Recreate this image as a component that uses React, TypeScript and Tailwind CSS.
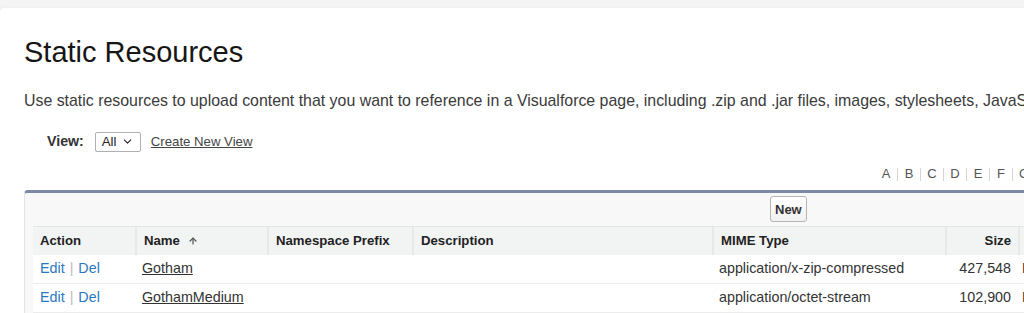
import { ChevronDown, ArrowUp } from "lucide-react";

const cols = [
  { label: "Action", w: "w-[102px]" },
  { label: "Name", w: "w-[132px]", sort: true },
  { label: "Namespace Prefix", w: "w-[145px]" },
  { label: "Description", w: "w-[300px]" },
  { label: "MIME Type", w: "w-[233px]" },
  { label: "Size", w: "w-[73px]", right: true },
  { label: "Cache Control", w: "w-[140px]" },
];

const rows = [
  { name: "Gotham", mime: "application/x-zip-compressed", size: "427,548" },
  { name: "GothamMedium", mime: "application/octet-stream", size: "102,900" },
];

const letters = ["A", "B", "C", "D", "E", "F", "G", "H"];

const App = () => {
  return (
    <div className="h-[313px] w-[1024px] overflow-hidden bg-[#f4f4f4] pt-2 font-['Liberation_Sans',Arial,sans-serif]">
      <div className="h-full rounded-tl-[4px] bg-white pl-6 shadow-[0_0_1px_rgba(0,0,0,0.15)]">
        {/* Title */}
        <h1 className="pt-[26px] text-[29px] leading-[36px] text-[#161616]">Static Resources</h1>
        <p className="mt-[21px] whitespace-nowrap text-[15.9px] leading-5 text-[#3a3a3a]">
          Use static resources to upload content that you want to reference in a Visualforce page, including .zip and .jar files, images, stylesheets, JavaScript, and other files.
        </p>

        {/* View selector */}
        <div className="mt-[20px] flex items-center pl-[23px] text-[13.2px]">
          <span className="text-[14.2px] font-bold text-[#333]">View:</span>
          <div className="ml-[11px] flex h-[20px] w-[46px] items-center gap-[5px] rounded-[2px] border border-[#b0b0b0] pl-[6px] text-[#222]">
            <span>All</span>
            <ChevronDown size={13} strokeWidth={2} />
          </div>
          <span className="ml-[10px] text-[#444] underline">Create New View</span>
        </div>

        {/* Alphabet */}
        <div className="mt-[12px] flex justify-end whitespace-nowrap text-[13px] text-[#555]">
          <div className="-mr-[28px] flex">
            {letters.map((l, i) => (
              <span key={l} className="flex items-center">
                {i > 0 && <span className="mx-[6px] h-[13px] w-px bg-[#d4d4d4]" />}
                <span className="w-[10px] text-center">{l}</span>
              </span>
            ))}
          </div>
        </div>

        {/* List panel */}
        <div className="mt-[6px] rounded-tl-[4px] border-t-[3px] border-l border-[#7d8aa4] border-l-[#e4e4e4] bg-[#f8f8f8] pl-[8px]">
          <div className="flex h-[33px] items-center pl-[737px]">
            <button className="h-[26px] rounded-[3px] border border-[#b5b5b5] bg-gradient-to-b from-white to-[#f1f1f1] px-[4px] text-[13px] font-bold text-[#333]">
              New
            </button>
          </div>
          <div className="flex h-[29px] border-t border-[#e5e5e5] bg-[#f2f3f3] text-[13.2px] font-bold text-[#222]">
            {cols.map((c, i) => (
              <div
                key={c.label}
                className={`${c.w} flex shrink-0 items-center gap-[8px] whitespace-nowrap px-[7px] ${i > 0 ? "border-l-2 border-[#e6e8ea]" : ""} ${c.right ? "justify-end" : ""}`}
              >
                <span>{c.label}</span>
                {c.sort && <ArrowUp size={10} strokeWidth={3} className="text-[#555]" />}
              </div>
            ))}
          </div>
          {rows.map((r) => (
            <div key={r.name} className="flex h-[29px] border-b border-[#ececec] bg-white text-[14.3px] text-[#333]">
              <div className="flex w-[102px] shrink-0 items-center px-[7px]">
                <span className="text-[#2a78c2]">Edit</span>
                <span className="mx-[5px] text-[#bbb]">|</span>
                <span className="text-[#2a78c2]">Del</span>
              </div>
              <div className="flex w-[132px] shrink-0 items-center px-[7px]">
                <span className="underline">{r.name}</span>
              </div>
              <div className="w-[145px] shrink-0" />
              <div className="w-[300px] shrink-0" />
              <div className="flex w-[233px] shrink-0 items-center px-[7px]">{r.mime}</div>
              <div className="flex w-[73px] shrink-0 items-center justify-end px-[7px]">{r.size}</div>
              <div className="flex w-[140px] shrink-0 items-center px-[4px]">Private</div>
            </div>
          ))}
        </div>
      </div>
    </div>
  );
};

export default App;
